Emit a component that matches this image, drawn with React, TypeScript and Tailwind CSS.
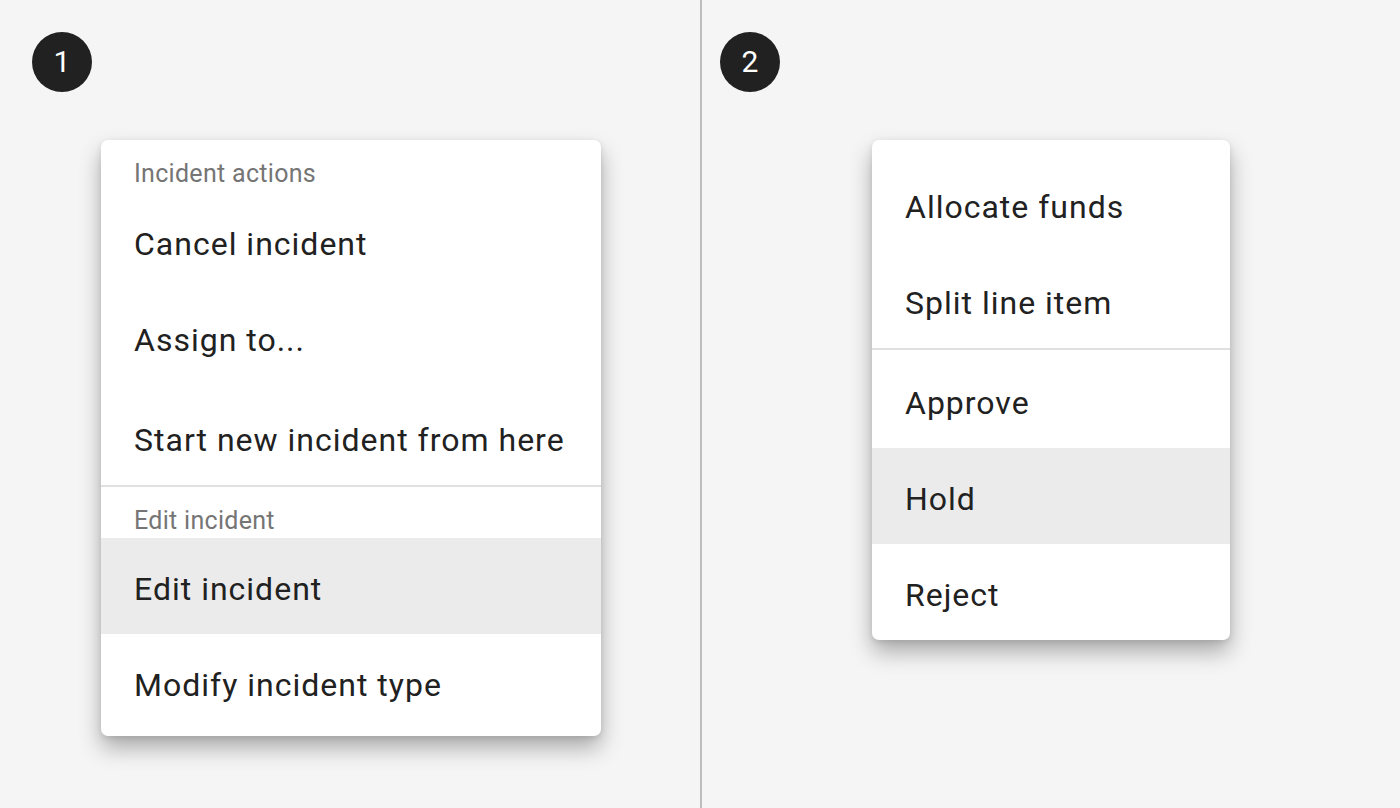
const font = { fontFamily: 'Roboto, "Noto Sans", sans-serif' }

function Badge({ n }: { n: string }) {
  return (
    <div className="flex h-[60px] w-[60px] items-center justify-center rounded-full bg-[#212121] text-[30px] leading-none text-white">
      {n}
    </div>
  )
}

function Item({ label, active, className = '' }: { label: string; active?: boolean; className?: string }) {
  return (
    <div
      className={`flex h-[96px] items-center pt-[5px] text-[32px] tracking-[1px] text-[#212121] ${active ? 'bg-[#ebebeb]' : ''} ${className}`}
    >
      {label}
    </div>
  )
}

function Header({ label, className = '' }: { label: string; className?: string }) {
  return (
    <div className={`px-[33px] text-[25px] leading-[24px] tracking-[0.3px] text-[#757575] ${className}`}>
      {label}
    </div>
  )
}

const shadow = 'shadow-[0_12px_22px_rgba(0,0,0,0.3),0_2px_6px_rgba(0,0,0,0.1)]'

export default function App() {
  return (
    <div className="flex h-[808px] w-[1400px] bg-[#f5f5f5]" style={font}>
      <div className="flex w-[700px] flex-col">
        <div className="pl-[32px] pt-[32px]">
          <Badge n="1" />
        </div>
        <div className="mt-[48px] flex justify-center pl-[2px]">
          <div className={`w-[500px] overflow-hidden rounded-[7px] bg-white pb-[6px] ${shadow}`}>
            <Header label="Incident actions" className="h-[53px] pt-[22px]" />
            <Item label="Cancel incident" className="px-[33px]" />
            <Item label="Assign to..." className="px-[33px]" />
            <Item label="Start new incident from here" className="mt-[4px] px-[33px]" />
            <div className="h-[2px] bg-[#e0e0e0]" />
            <Header label="Edit incident" className="h-[51px] pt-[22px]" />
            <Item label="Edit incident" active className="px-[33px]" />
            <Item label="Modify incident type" className="px-[33px]" />
          </div>
        </div>
      </div>
      <div className="w-[2px] bg-[#bdbdbd]" />
      <div className="flex flex-1 flex-col">
        <div className="pl-[18px] pt-[32px]">
          <Badge n="2" />
        </div>
        <div className="mt-[48px] flex justify-center">
          <div className={`w-[358px] overflow-hidden rounded-[7px] bg-white pt-[16px] ${shadow}`}>
            <Item label="Allocate funds" className="px-[33px]" />
            <Item label="Split line item" className="px-[33px]" />
            <div className="mb-[2px] h-[2px] bg-[#e0e0e0]" />
            <Item label="Approve" className="px-[33px]" />
            <Item label="Hold" active className="px-[33px]" />
            <Item label="Reject" className="px-[33px]" />
          </div>
        </div>
      </div>
    </div>
  )
}
